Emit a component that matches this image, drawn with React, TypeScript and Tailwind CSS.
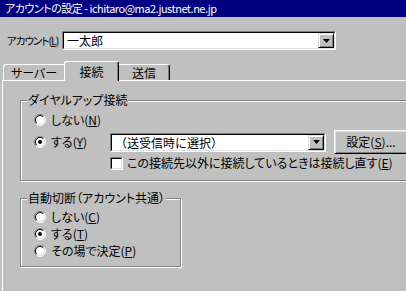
import React from "react";

function Radio({ checked }: { checked?: boolean }) {
  return (
    <svg width="12" height="12" viewBox="0 0 12 12" className="shrink-0">
      <circle cx="6" cy="6" r="5" fill="#fff" />
      <path d="M2.1 9.9A5.5 5.5 0 0 1 9.9 2.1" fill="none" stroke="#808080" />
      <path d="M9.9 2.1A5.5 5.5 0 0 1 2.1 9.9" fill="none" stroke="#fff" />
      <path d="M2.8 9.2A4.5 4.5 0 0 1 9.2 2.8" fill="none" stroke="#000" />
      <path d="M9.2 2.8A4.5 4.5 0 0 1 2.8 9.2" fill="none" stroke="#dfdfdf" />
      {checked && <circle cx="6" cy="6" r="2" fill="#000" />}
    </svg>
  );
}

function Key({ k }: { k: string }) {
  return (
    <>
      (<span className="underline underline-offset-1">{k}</span>)
    </>
  );
}

function DropButton() {
  return (
    <div className="flex w-[16px] shrink-0 items-center justify-center border border-t-[#dfdfdf] border-l-[#dfdfdf] border-r-black border-b-black bg-[#c0c0c0] shadow-[inset_1px_1px_0_#fff,inset_-1px_-1px_0_#808080]">
      <svg width="7" height="4" viewBox="0 0 7 4">
        <path d="M0 0h7L3.5 4z" fill="#000" />
      </svg>
    </div>
  );
}

function Combo({ className, text }: { className: string; text: string }) {
  return (
    <div className={`flex h-[19px] border border-t-[#808080] border-l-[#808080] border-r-white border-b-white ${className}`}>
      <div className="flex flex-1 border border-t-black border-l-black border-r-[#dfdfdf] border-b-[#dfdfdf] bg-white">
        <div className="flex-1 truncate pl-[3px] leading-[15px] [font-feature-settings:normal]">{text}</div>
        <DropButton />
      </div>
    </div>
  );
}

function Option({ checked, children }: { checked?: boolean; children: React.ReactNode }) {
  return (
    <div className="flex h-[16px] items-center gap-[5px]">
      <Radio checked={checked} />
      <span className="whitespace-nowrap leading-[16px]">{children}</span>
    </div>
  );
}

export default function App() {
  return (
    <div className="flex h-[291px] w-[406px] flex-col overflow-hidden bg-[#c0c0c0] font-['Noto_Sans_CJK_JP','Liberation_Sans',sans-serif] text-[12px] text-black [font-feature-settings:'palt']">
      <div className="h-[17px] shrink-0 bg-[#000080] pl-[5px] text-[11px] leading-[17px] tracking-[-0.5px] text-white">
        アカウントの設定 - ichitaro@ma2.justnet.ne.jp
      </div>

      <div className="mt-[14px] flex h-[19px] shrink-0 items-center pl-[7px]">
        <span className="w-[55px] shrink-0 whitespace-nowrap text-[10.5px] tracking-[-1px]">
          アカウント<Key k="L" />
        </span>
        <Combo className="w-[274px]" text="一太郎" />
      </div>

      <div className="mt-[11px] flex h-[19px] shrink-0 items-end pl-[3px]">
        <div className="flex h-[16px] w-[61px] items-center justify-center rounded-tl-[3px] border-t border-l border-white">
          サーバー
        </div>
        <div className="relative z-10 mb-[-1px] flex h-[20px] w-[55px] items-start justify-center rounded-t-[3px] border-t border-l border-r border-t-white border-l-white border-r-black bg-[#c0c0c0] pt-[1px] shadow-[inset_-1px_0_0_#808080]">
          接続
        </div>
        <div className="flex h-[16px] w-[51px] items-center justify-center rounded-tr-[3px] border-t border-r border-t-white border-r-black shadow-[inset_-1px_0_0_#808080]">
          送信
        </div>
      </div>

      <div className="ml-[2px] flex flex-1 flex-col border-t border-l border-white">
        <div className="relative mt-[19px] ml-[17px] h-[81px] w-[420px] shrink-0 border border-[#808080] pt-[11px] pl-[13px] shadow-[inset_1px_1px_0_#fff,1px_1px_0_#fff]">
          <span className="absolute top-[-9px] left-[6px] bg-[#c0c0c0] px-[1px] leading-[16px]">
            ダイヤルアップ接続
          </span>
          <Option>
            しない<Key k="N" />
          </Option>
          <div className="mt-[2px] flex h-[24px] items-center">
            <div className="w-[76px] shrink-0">
              <Option checked>
                する<Key k="Y" />
              </Option>
            </div>
            <Combo className="w-[216px]" text="（送受信時に選択）" />
            <div className="ml-[8px] flex h-[24px] w-[74px] shrink-0 items-center justify-center border border-t-white border-l-white border-r-black border-b-black shadow-[inset_1px_1px_0_#dfdfdf,inset_-1px_-1px_0_#808080]">
              設定<Key k="S" />...
            </div>
          </div>
          <div className="mt-[1px] ml-[76px] flex h-[16px] items-center gap-[4px]">
            <div className="h-[13px] w-[13px] shrink-0 border border-t-[#808080] border-l-[#808080] border-r-white border-b-white">
              <div className="h-full w-full border border-t-black border-l-black border-r-[#dfdfdf] border-b-[#dfdfdf] bg-white" />
            </div>
            <span className="whitespace-nowrap leading-[16px]">
              この接続先以外に接続しているときは接続し直す<Key k="E" />
            </span>
          </div>
        </div>

        <div className="relative mt-[17px] ml-[17px] flex h-[69px] w-[161px] shrink-0 flex-col gap-[1px] border border-[#808080] pt-[10px] pl-[13px] shadow-[inset_1px_1px_0_#fff,1px_1px_0_#fff]">
          <span className="absolute top-[-9px] left-[6px] whitespace-nowrap bg-[#c0c0c0] px-[1px] leading-[16px]">
            自動切断（アカウント共通）
          </span>
          <Option>
            しない<Key k="C" />
          </Option>
          <Option checked>
            する<Key k="T" />
          </Option>
          <Option>
            その場で決定<Key k="P" />
          </Option>
        </div>
      </div>
    </div>
  );
}
